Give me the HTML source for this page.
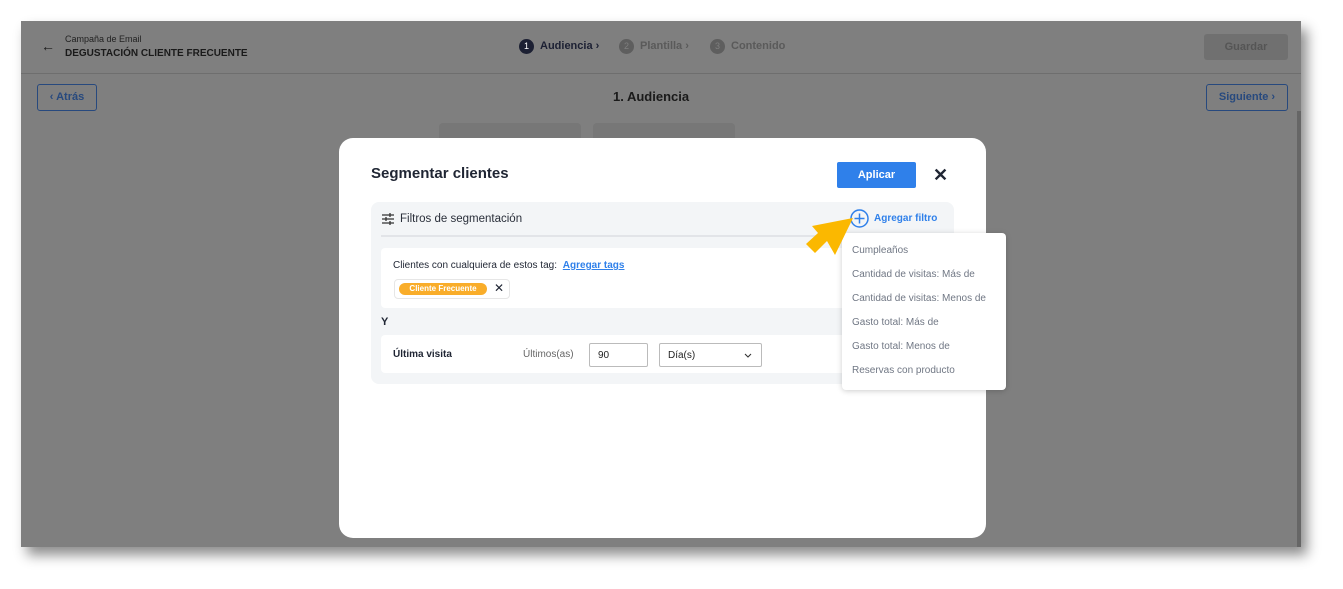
<!DOCTYPE html>
<html><head><meta charset="utf-8"><style>
*{box-sizing:border-box;margin:0;padding:0}
body{width:1343px;height:589px;background:#fff;font-family:"Liberation Sans",sans-serif;position:relative;overflow:hidden}
.app{position:absolute;left:21px;top:21px;width:1280px;height:526px;background:#7f7f7f;box-shadow:6px 8px 12px rgba(0,0,0,.45);overflow:hidden}
.abs{position:absolute}
.t{color:#1f2533}
.modal{position:absolute;left:339px;top:138px;width:647px;height:400px;background:#fff;border-radius:14px}
.dd div{font-size:10px;color:#707784;height:24px;line-height:24px;padding-left:10px}
</style></head><body>
<div class="app">
 <div class="abs" style="left:0;top:52px;width:1280px;height:1px;background:#6e6e6e"></div>
 <div class="abs" style="left:20px;top:17px;font-size:14px;color:#1a1a1a">←</div>
 <div class="abs" style="left:44px;top:13px;font-size:9px;color:#222">Campaña de Email</div>
 <div class="abs" style="left:44px;top:27px;font-size:10px;font-weight:bold;color:#1a1a1a">DEGUSTACIÓN CLIENTE FRECUENTE</div>
 <div class="abs" style="left:498px;top:18px;width:15px;height:15px;border-radius:50%;background:#1c2033;color:#fff;font-size:9px;text-align:center;line-height:15px">1</div>
 <div class="abs" style="left:519px;top:19px;font-size:11px;font-weight:bold;color:#1c2033">Audiencia ›</div>
 <div class="abs" style="left:598px;top:18px;width:15px;height:15px;border-radius:50%;background:#5e5e5e;color:#7f7f7f;font-size:9px;text-align:center;line-height:15px">2</div>
 <div class="abs" style="left:619px;top:19px;font-size:11px;font-weight:bold;color:#5a5a5a">Plantilla ›</div>
 <div class="abs" style="left:689px;top:18px;width:15px;height:15px;border-radius:50%;background:#5e5e5e;color:#7f7f7f;font-size:9px;text-align:center;line-height:15px">3</div>
 <div class="abs" style="left:710px;top:19px;font-size:11px;font-weight:bold;color:#5a5a5a">Contenido</div>
 <div class="abs" style="left:1183px;top:13px;width:84px;height:26px;background:#707070;border-radius:3px;color:#555;font-size:11px;font-weight:bold;text-align:center;line-height:26px">Guardar</div>
 <div class="abs" style="left:16px;top:63px;width:60px;height:27px;border:1.5px solid #27497e;border-radius:3px;color:#27497e;font-size:11px;font-weight:bold;text-align:center;line-height:24px">‹ Atrás</div>
 <div class="abs" style="left:592px;top:68px;font-size:13px;font-weight:bold;color:#1a1a1a">1. Audiencia</div>
 <div class="abs" style="left:1185px;top:63px;width:82px;height:27px;border:1.5px solid #27497e;border-radius:3px;color:#27497e;font-size:11px;font-weight:bold;text-align:center;line-height:24px">Siguiente ›</div>
 <div class="abs" style="left:418px;top:102px;width:142px;height:40px;background:#777;border-radius:4px"></div>
 <div class="abs" style="left:572px;top:102px;width:142px;height:40px;background:#777;border-radius:4px"></div>
 <div class="abs" style="left:1276px;top:90px;width:4px;height:436px;background:#666"></div>
</div>
<div class="modal">
 <div class="abs t" style="left:32px;top:27px;font-size:15px;font-weight:bold">Segmentar clientes</div>
 <div class="abs" style="left:498px;top:24px;width:79px;height:26px;background:#2f80ea;border-radius:2px;color:#fff;font-size:11px;font-weight:bold;text-align:center;line-height:26px">Aplicar</div>
 <div class="abs t" style="left:594px;top:27px;font-size:18px;font-weight:bold">✕</div>
 <div class="abs" style="left:32px;top:64px;width:583px;height:182px;background:#f3f5f7;border-radius:8px"></div>
 <div class="abs" style="left:42px;top:97px;width:572px;height:2px;background:#e2e4e8"></div>
 <svg class="abs" style="left:43px;top:75px" width="12" height="12" viewBox="0 0 12 12" stroke="#333" stroke-width="1.3"><path d="M0 2h12M0 6h12M0 10h12"/><path d="M8 0v4M4 4v4M8 8v4"/></svg>
 <div class="abs t" style="left:61px;top:75px;font-size:11.5px;color:#2a2f3a">Filtros de segmentación</div>
 <svg class="abs" style="left:511px;top:71px" width="19" height="19" viewBox="0 0 19 19" fill="none" stroke="#2f80ea" stroke-width="1.5"><circle cx="9.5" cy="9.5" r="8.5"/><path d="M9.5 4.5v10M4.5 9.5h10"/></svg>
 <div class="abs" style="left:535px;top:75px;font-size:10px;font-weight:bold;color:#2f80ea">Agregar filtro</div>
 <div class="abs" style="left:42px;top:110px;width:490px;height:60px;background:#fff;border-radius:4px"></div>
 <div class="abs t" style="left:54px;top:122px;font-size:10px">Clientes con cualquiera de estos tag: <span style="color:#2f80ea;font-weight:bold;text-decoration:underline;margin-left:3px">Agregar tags</span></div>
 <div class="abs" style="left:55px;top:141px;width:116px;height:20px;border:1px solid #e6e6e6;border-radius:4px"></div>
 <div class="abs" style="left:60px;top:145px;width:88px;height:12px;background:#f9ad2a;border-radius:6px;color:#fff;font-size:8px;font-weight:bold;text-align:center;line-height:12px">Cliente Frecuente</div>
 <div class="abs t" style="left:155px;top:143px;font-size:12px">✕</div>
 <div class="abs t" style="left:42px;top:178px;font-size:11px;font-weight:bold">Y</div>
 <div class="abs" style="left:42px;top:197px;width:490px;height:38px;background:#fff;border-radius:4px"></div>
 <div class="abs t" style="left:54px;top:211px;font-size:10px;font-weight:bold">Última visita</div>
 <div class="abs" style="left:184px;top:211px;font-size:10px;color:#666">Últimos(as)</div>
 <div class="abs" style="left:250px;top:205px;width:59px;height:24px;border:1px solid #bbb;border-radius:2px;font-size:10px;padding:6px 8px;color:#222">90</div>
 <div class="abs" style="left:320px;top:205px;width:103px;height:24px;border:1px solid #bbb;border-radius:2px;font-size:10px;padding:6px 8px;color:#222">Día(s)<svg style="position:absolute;right:9px;top:9px" width="8" height="5" viewBox="0 0 8 5" fill="none" stroke="#333" stroke-width="1.1"><path d="M1 1l3 3 3-3"/></svg></div>
</div>
<div class="abs dd" style="left:842px;top:233px;width:164px;height:157px;background:#fff;border-radius:4px;box-shadow:0 1px 6px rgba(0,0,0,.2);padding-top:6px">
 <div>Cumpleaños</div><div>Cantidad de visitas: Más de</div><div>Cantidad de visitas: Menos de</div><div>Gasto total: Más de</div><div>Gasto total: Menos de</div><div>Reservas con producto</div>
</div>
<svg class="abs" style="left:0;top:0" width="1343" height="589"><polygon points="853,218 835,255 827,241 815,253 806,244 818,233 812,226" fill="#fbb800"/></svg>
</body></html>
